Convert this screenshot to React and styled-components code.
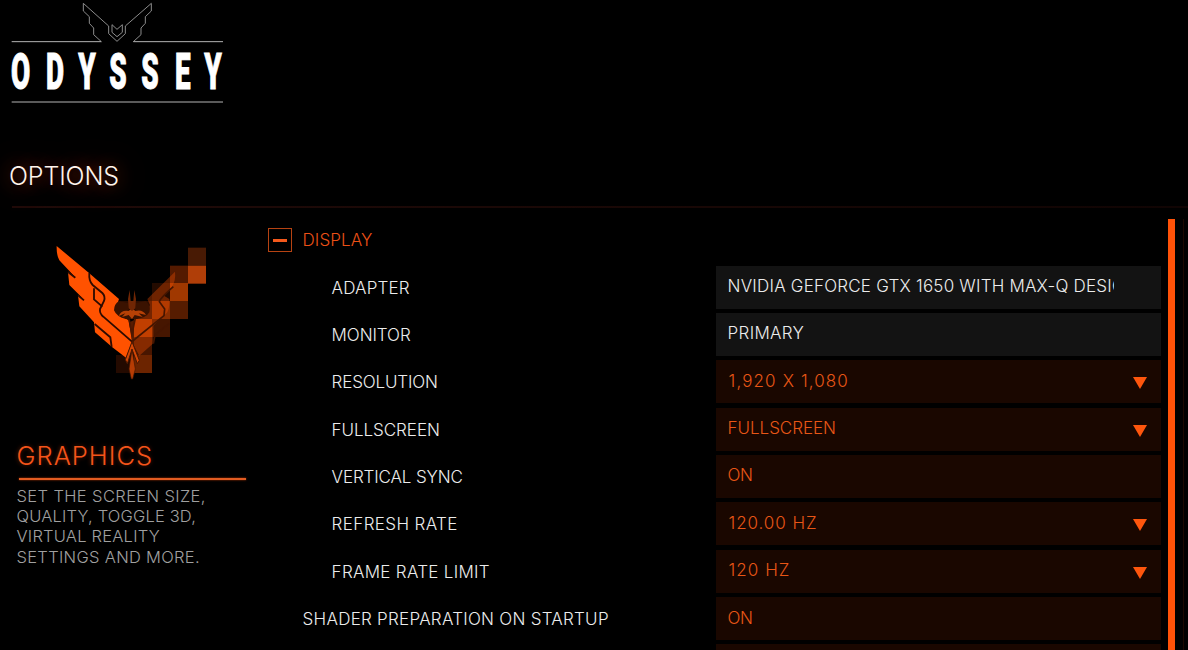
import React from 'react'
import styled, { createGlobalStyle } from 'styled-components'

const GlobalStyle = createGlobalStyle`
    *{
        box-sizing:border-box;
    }
    body{
        margin:0;
        background:#000;
        color:#ececec;
        font:300 17px/20px Inter,"Liberation Sans",sans-serif;
        text-transform:uppercase;
    }
`

const Page = styled.div`
    width:1188px;
    height:650px;
    display:flex;
    flex-direction:column;
    overflow:hidden;
    background:#000;
`
const Header = styled.header`
    height:208px;
    flex:none;
    display:flex;
    flex-direction:column;
    justify-content:space-between;
`
const PageTitle = styled.h1`
    margin:0 0 14px;
    padding-left:9px;
    font-size:25px;
    line-height:32px;
    font-weight:300;
    letter-spacing:-.13px;
    color:#fff4ec;
    text-shadow:0 0 18px rgba(255,80,10,.5),0 0 34px rgba(255,60,0,.4);
`
const Divider = styled.div`
    height:2px;
    margin-left:12px;
    background:linear-gradient(90deg,#200a08,#180705 60%,#100403);
`
const Body = styled.main`
    flex:1;
    min-height:0;
    display:grid;
    grid-template-columns:268px 893px 7px 7px 8px 1px;
    padding-top:10.5px;
`
const Sidebar = styled.aside`
    padding:16.5px 0 0 17px;
`
const SectionTitle = styled.h2`
    margin:54px 0 0 -.5px;
    width:230px;
    height:42px;
    font-size:25.5px;
    line-height:34px;
    font-weight:300;
    letter-spacing:1px;
    color:#f4541a;
    text-shadow:0 0 4px rgba(255,70,0,.4);
`
const Rule = styled.div`
    width:227px;
    height:2px;
    margin:-3px 0 0 2px;
    background:#e25c22;
    box-shadow:0 0 2px #c43c00;
`
const Description = styled.p`
    margin:6px 0 0 -.5px;
    font-size:16.5px;
    line-height:20.2px;
    color:#a0a0a0;
`
const Line = styled.span`
    display:block;
    letter-spacing:${props=>props.$tracking}px;
`
const OptionList = styled.section`
    overflow:hidden;
`
const GroupHeader = styled.div`
    display:flex;
    align-items:center;
    height:47px;
    padding-bottom:4px;
    color:#ec5016;
    letter-spacing:.1px;
`
const Toggle = styled.span`
    width:24px;
    height:24px;
    margin-right:10.5px;
    display:flex;
    align-items:center;
    justify-content:center;
    border:1.5px solid #b64312;
    &::after
    {
        content:'';
        width:14px;
        height:3px;
        background:#f4591c;
    }
`
const Row = styled.div`
    display:grid;
    grid-template-columns:448px 445px;
    height:47.36px;
`
const Label = styled.span`
    padding:12px 0 0 ${props=>props.$nested?63.6:34.6}px;
    letter-spacing:${props=>props.$tracking}px;
    white-space:nowrap;
`
const Field = styled.div`
    height:43px;
    display:flex;
    align-items:flex-start;
    justify-content:space-between;
    padding:10.5px 14px 0 11.6px;
    background:${props=>props.$locked?'#131313':'#1a0700'};
    color:${props=>props.$locked?'#ececec':'#e85616'};
`
const Value = styled.span`
    max-width:386.5px;
    overflow:hidden;
    white-space:nowrap;
    padding-left:${props=>props.$inset||0}px;
    letter-spacing:${props=>props.$tracking}px;
`
const Arrow = styled.svg`
    width:14px;
    height:12px;
    margin-top:6.5px;
    fill:#ff560d;
`
const Scrollbar = styled.div`
    grid-column:4;
    background:#ff5208;
`
const Edge = styled.div`
    grid-column:6;
    background:#1c0801;
`
const LogoSvg = styled.svg`
    width:240px;
    height:110px;
    display:block;
`
const EmblemSvg = styled.svg`
    width:180px;
    height:150px;
    margin-left:23px;
    display:block;
`

// nested rows belong to the open Display group
const options = [
    { label:'Adapter', tracking:.15, value:'NVIDIA GeForce GTX 1650 with Max-Q Design', valueTracking:.21, locked:true, nested:true },
    { label:'Monitor', tracking:-.08, value:'Primary', valueTracking:.3, locked:true, nested:true },
    { label:'Resolution', tracking:-.15, value:'1,920 x 1,080', valueTracking:1.12, inset:1, select:true, nested:true },
    { label:'Fullscreen', tracking:-.05, value:'Fullscreen', valueTracking:-.04, select:true, nested:true },
    { label:'Vertical Sync', tracking:-.13, value:'On', valueTracking:-.4, nested:true },
    { label:'Refresh Rate', tracking:.38, value:'120.00 Hz', valueTracking:.93, inset:1, select:true, nested:true },
    { label:'Frame Rate Limit', tracking:.3, value:'120 Hz', valueTracking:1.05, inset:1, select:true, nested:true },
    { label:'Shader Preparation on Startup', tracking:.26, value:'On', valueTracking:-.4 },
    { label:'', value:'' },
]

const description = [
    ['Set the screen size,', .38],
    ['quality, toggle 3D,', .17],
    ['virtual reality', .22],
    ['settings and more.', .31],
]

// x, y, colour of the squares the right wing breaks into
const pixels = [
    [444,38,'#481a04'],
    [390,92,'#541a00'],[444,92,'#b03e08'],
    [336,144,'#240b00'],[390,144,'#a03800'],
    [228,198,'#2c0d00'],[282,198,'#2c0d00'],[336,198,'#8a2e00'],[390,198,'#561c00'],
    [282,252,'#a23600'],[336,252,'#461600'],
    [282,306,'#481600'],
    [228,360,'#240a00'],[282,360,'#6c2400'],
]

const Logo = () => (
    <LogoSvg viewBox="0 0 720 330">
        <g fill="none" stroke="#8c8c8c" strokeWidth="3">
            <path d="M304 125L281 104V84L268 70V50L250 33V10L326 78V101L351 124L376 101V78L454 10V33L436 50V70L423 84V104L400 125" />
            <path d="M336 74L351 88L367 74V97L351 110L336 97Z" />
        </g>
        <path d="M35 125H304M400 125H669M35 306H669" stroke="#b4b4b4" strokeWidth="3" />
        <text
            transform="scale(.56 1)"
            x="110.7 294 466 632 804 979 1141"
            y="267"
            textAnchor="middle"
            fill="#fff"
            stroke="#fff"
            strokeWidth="3"
            fontFamily="Roboto, sans-serif"
            fontWeight="900"
            fontSize="149"
        >
            ODYSSEY
        </text>
    </LogoSvg>
)

const Emblem = () => (
    <EmblemSvg viewBox="0 0 540 450">
        {pixels.map(([x,y,fill])=><rect key={`${x}-${y}`} x={x} y={y} width="54" height="54" fill={fill} />)}
        <path d="M405 110Q408 135 396 155L372 182L388 192Q390 215 382 232L340 272V325L298 362L276 322L268 262L316 240L330 210L322 192Z" fill="#ff5200" opacity=".34" />
        <g fill="none" stroke="#441500" strokeWidth="5">
            <path d="M278 318L372 242L374 222L358 200Q362 188 400 155" />
            <path d="M388 265L345 300L340 326" />
        </g>
        <path d="M50 33L148 115L237 192L230 212L244 244L266 256L276 320L258 368L216 336L165 292L162 262L118 214L114 181L131 193L88 150L84 112L105 126L58 76Q49 60 50 33Z" fill="#ff5200" />
        <g fill="none" stroke="#2c0b00" strokeWidth="5.5">
            <path d="M148 114Q146 138 158 150L187 174Q197 184 192 198L180 222Q178 236 190 245L276 320" />
            <path d="M162 160V193L187 215" />
            <path d="M84 111L106 128M114 181L132 196M164 267L211 307L215 336" />
        </g>
        <path d="M236 199L266 204V226H286V204L318 198Q334 215 328 232Q318 250 286 252H258Q230 246 222 226Q222 208 236 199Z" fill="#3a1200" />
        <path d="M236 243Q244 224 266 228L276 220L286 228Q308 222 318 240L296 235L308 246L284 240L276 252L266 240L246 246L256 235Z" fill="#b74106" />
        <path d="M266 220L264 192L269 165L272 198H280L283 165L288 192L286 220L276 228Z" fill="#702604" />
        <path d="M264 252L276 308L288 252L282 253L276 285L270 253Z" fill="#4a1600" />
        <path d="M276 320L298 376L292 386L276 343L262 386L256 374Z" fill="#d34706" stroke="#4a1700" strokeWidth="3" />
        <path d="M276 343L286 402L278 432H274L267 402Z" fill="#b63c04" stroke="#441500" strokeWidth="2" />
    </EmblemSvg>
)

const Option = ({option}) => (
    <Row>
        <Label $nested={option.nested} $tracking={option.tracking||0}>{option.label}</Label>
        <Field $locked={option.locked}>
            <Value $inset={option.inset} $tracking={option.valueTracking||0}>{option.value}</Value>
            {option.select && <Arrow viewBox="0 0 14 12"><path d="M0 0H14L7 12Z" /></Arrow>}
        </Field>
    </Row>
)

const App = () => {
    return (
    <>
        <GlobalStyle />
        <Page>
            <Header>
                <Logo />
                <div>
                    <PageTitle>Options</PageTitle>
                    <Divider />
                </div>
            </Header>
            <Body>
                <Sidebar>
                    <Emblem />
                    <SectionTitle>Graphics</SectionTitle>
                    <Rule />
                    <Description>
                        {description.map(([text,tracking])=><Line key={text} $tracking={tracking}>{text}</Line>)}
                    </Description>
                </Sidebar>
                <OptionList>
                    <GroupHeader>
                        <Toggle />
                        Display
                    </GroupHeader>
                    {options.map(option=><Option key={option.label} option={option} />)}
                </OptionList>
                <Scrollbar />
                <Edge />
            </Body>
        </Page>
    </>
    )
}

export default App
